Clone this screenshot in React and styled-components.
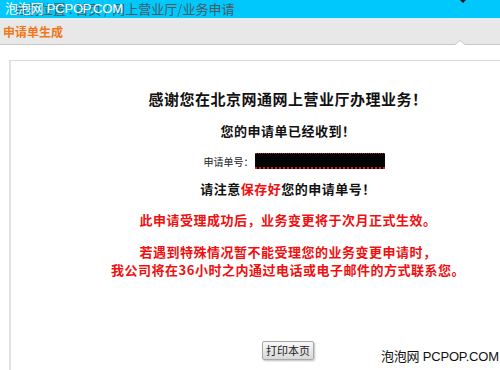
import React from 'react';
import styled, { createGlobalStyle } from 'styled-components';

const Global = createGlobalStyle`
  html, body { margin: 0; padding: 0; background: #fff; overflow: hidden; }
  body { width: 500px; height: 370px; font-family: "Noto Sans CJK SC", "Liberation Sans", sans-serif; }
`;

const Page = styled.div`
  position: relative;
  width: 500px;
  height: 370px;
  overflow: hidden;
`;

const TopBar = styled.div`
  position: relative;
  height: 18px;
  background: #00c8fc;
  padding-left: 14px;
  font-size: 13px;
  line-height: 18px;
  color: #4a5a60;
  white-space: nowrap;
`;

const Watermark = styled.span`
  position: absolute;
  left: ${p => p.$left}px;
  top: ${p => p.$top}px;
  font-family: "Liberation Sans", "Noto Sans CJK SC", sans-serif;
  font-size: 13px;
  line-height: 16px;
  color: ${p => p.$color};
  letter-spacing: -0.2px;
  white-space: nowrap;
`;

const Pointer = styled.span`
  position: absolute;
  top: 0;
  left: 460px;
  width: 0;
  height: 0;
  border-left: 3px solid transparent;
  border-right: 3px solid transparent;
  border-top: 3px solid #111;
`;

const TitleBar = styled.div`
  position: relative;
  height: 25px;
  background: #e8e8e8;
  border-top: 1px solid #d8f0f8;
  border-bottom: 1px solid #c8c8c8;
  padding-left: 3px;
  font-size: 12px;
  font-weight: bold;
  line-height: 25px;
  color: #f07818;
`;

const Notch = styled.span`
  position: absolute;
  left: 454px;
  bottom: -1px;
  width: 0;
  height: 0;
  border-left: 6px solid transparent;
  border-right: 6px solid transparent;
  border-bottom: 5px solid #c8c8c8;

  &::after {
    content: '';
    position: absolute;
    left: -5px;
    top: 1px;
    border-left: 5px solid transparent;
    border-right: 5px solid transparent;
    border-bottom: 4px solid #fff;
  }
`;

const Panel = styled.div`
  margin: 15px 0 0 9px;
  width: 556px;
  height: 330px;
  border-top: 1px solid #dcdcdc;
  border-left: 2px solid #e2e2e2;
  display: flex;
  flex-direction: column;
  align-items: center;
  padding-top: 29px;
  box-sizing: border-box;
`;

const Line = styled.div`
  font-size: ${p => p.$size || 13}px;
  font-weight: bold;
  line-height: ${p => p.$lh || 16}px;
  letter-spacing: 0.5px;
  color: ${p => (p.$red ? '#f01010' : '#111')};
  margin-top: ${p => p.$mt || 0}px;
  text-align: center;
  white-space: nowrap;
`;

const Red = styled.span`
  color: #f01010;
`;

const NumberRow = styled.div`
  display: flex;
  align-items: center;
  gap: 1px;
  margin-top: 14px;
  margin-left: 12px;
  font-size: 10px;
  color: #222;
`;

const Redacted = styled.span`
  display: inline-block;
  width: 130px;
  height: 13px;
  background: #050505;
  border-bottom: 2px dotted #e02020;
  border-top: 1px dotted #b02020;
`;

const PrintButton = styled.button`
  margin-top: 62px;
  margin-left: 0;
  height: 19px;
  padding: 0 3px;
  font-family: "Noto Sans CJK SC", sans-serif;
  font-size: 11px;
  line-height: 17px;
  color: #222;
  background: linear-gradient(#f8f8f8, #d8d8d8);
  border: 1px solid #a8a8a8;
  border-radius: 2px;
  box-shadow: 1px 1px 2px rgba(0,0,0,0.25);
`;

export default function App() {
  return (
    <Page>
      <Global />
      <TopBar>
        当前位置 : 首页 / 网上营业厅/业务申请
        <Watermark $left={5} $top={1} $color="#fff">泡泡网 PCPOP.COM</Watermark>
        <Pointer />
      </TopBar>
      <TitleBar>
        申请单生成
        <Notch />
      </TitleBar>
      <Panel>
        <Line $size={15} $lh={18}>感谢您在北京网通网上营业厅办理业务！</Line>
        <Line $mt={15}>您的申请单已经收到！</Line>
        <NumberRow>
          申请单号：<Redacted />
        </NumberRow>
        <Line $mt={12}>请注意<Red>保存好</Red>您的申请单号！</Line>
        <Line $mt={15} $red>此申请受理成功后，业务变更将于次月正式生效。</Line>
        <Line $mt={15} $lh={18} $red>
          若遇到特殊情况暂不能受理您的业务变更申请时，
          <br />
          我公司将在36小时之内通过电话或电子邮件的方式联系您。
        </Line>
        <PrintButton>打印本页</PrintButton>
      </Panel>
      <Watermark $left={381} $top={349} $color="#111">泡泡网 PCPOP.COM</Watermark>
    </Page>
  );
}
